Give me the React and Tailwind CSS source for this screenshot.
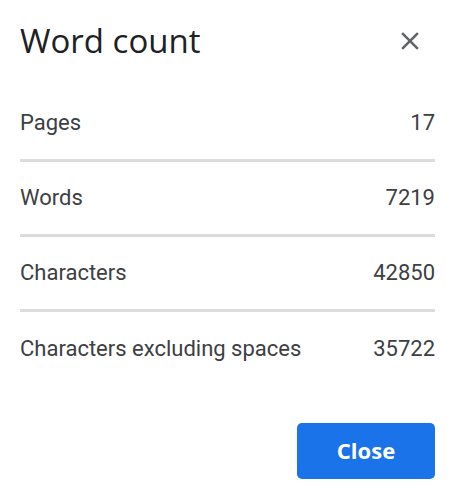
export default function App() {
  const rows = [
    ["Pages", "17"],
    ["Words", "7219"],
    ["Characters", "42850"],
    ["Characters excluding spaces", "35722"],
  ];
  return (
    <div className="w-[457px] h-[496px] bg-white" style={{ fontFamily: "Roboto, 'Liberation Sans', sans-serif" }}>
      <div className="pl-[20px] pr-[22px]">
        <div className="h-[87px] flex items-center justify-between">
          <h1 className="text-[33px] leading-[40px] text-[#202124] pb-[6px]" style={{ fontFamily: "'Open Sans', Roboto, sans-serif" }}>Word count</h1>
          <svg width="30" height="30" viewBox="0 0 24 24" className="mr-[10px] mb-[5px]">
            <path d="M19 6.41 17.59 5 12 10.59 6.41 5 5 6.41 10.59 12 5 17.59 6.41 19 12 13.41 17.59 19 19 17.59 13.41 12z" fill="#5f6368" />
          </svg>
        </div>
        <div className="flex flex-col">
          {rows.map(([k, v], i) => (
            <div key={k} className={`h-[75px] flex items-center justify-between text-[22px] text-[#3c4043] ${i < rows.length - 1 ? "border-b-[3px] border-[#dadce0]" : ""}`}>
              <span className="pb-[2px]">{k}</span>
              <span className="pb-[2px]">{v}</span>
            </div>
          ))}
        </div>
        <div className="flex justify-end mt-[36px]">
          <button className="w-[138px] h-[56px] rounded-[5px] bg-[#1a73e8] text-white text-[22px] font-bold pb-[2px]" style={{ fontFamily: "'Open Sans', Roboto, sans-serif" }}>Close</button>
        </div>
      </div>
    </div>
  );
}
